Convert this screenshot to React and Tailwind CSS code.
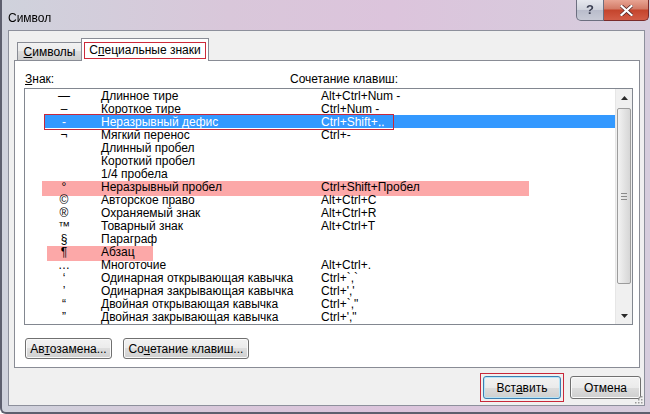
const ROWS = [
  ['—', 'Длинное тире', 'Alt+Ctrl+Num -'],
  ['–', 'Короткое тире', 'Ctrl+Num -'],
  ['-', 'Неразрывный дефис', 'Ctrl+Shift+‥'],
  ['¬', 'Мягкий перенос', 'Ctrl+-'],
  ['', 'Длинный пробел', ''],
  ['', 'Короткий пробел', ''],
  ['', '1/4 пробела', ''],
  ['°', 'Неразрывный пробел', 'Ctrl+Shift+Пробел'],
  ['©', 'Авторское право', 'Alt+Ctrl+C'],
  ['®', 'Охраняемый знак', 'Alt+Ctrl+R'],
  ['™', 'Товарный знак', 'Alt+Ctrl+T'],
  ['§', 'Параграф', ''],
  ['¶', 'Абзац', ''],
  ['…', 'Многоточие', 'Alt+Ctrl+.'],
  ['‘', 'Одинарная открывающая кавычка', 'Ctrl+`,`'],
  ['’', 'Одинарная закрывающая кавычка', "Ctrl+','"],
  ['“', 'Двойная открывающая кавычка', 'Ctrl+`,"'],
  ['”', 'Двойная закрывающая кавычка', 'Ctrl+\',"'],
];

const SELECTED = 2;

const BTN =
  'h-[21px] border border-[#707070] rounded-[3px] bg-[linear-gradient(#f2f2f2,#ebebeb_50%,#dddddd_50%,#cfcfcf)] shadow-[inset_0_0_0_1px_#fafafa] text-[12px] leading-none text-black flex items-center justify-center';

const Win7Button = ({ children, className = '' }) => (
  <div className={`${BTN} ${className}`}>{children}</div>
);

const Scrollbar = () => (
  <div className="w-[17px] h-full bg-[#f0f0f0] border-l border-[#e6e6e6] flex flex-col">
    <div className="h-[17px] flex items-center justify-center">
      <svg width="7" height="4" viewBox="0 0 7 4">
        <path d="M0 4 L3.5 0 L7 4 Z" fill="#2a2a2a" />
      </svg>
    </div>
    <div className="mt-[2px] h-[176px] mx-[1px] border border-[#9c9c9c] rounded-[2px] bg-[linear-gradient(90deg,#f3f3f3,#e4e4e4_50%,#d6d6d6)] flex flex-col items-center justify-center gap-[2px]">
      <div className="w-[6px] h-px bg-[#8a8a8a]" />
      <div className="w-[6px] h-px bg-[#8a8a8a]" />
      <div className="w-[6px] h-px bg-[#8a8a8a]" />
    </div>
    <div className="flex-1" />
    <div className="h-[17px] flex items-center justify-center">
      <svg width="7" height="4" viewBox="0 0 7 4">
        <path d="M0 0 L3.5 4 L7 0 Z" fill="#2a2a2a" />
      </svg>
    </div>
  </div>
);

const Row = ({ row, selected }) => {
  const [sym, name, keys] = row;
  return (
    <div className="h-[13px] flex text-[12px] leading-[12px]">
      <div className="w-[20px] shrink-0" />
      <div className={`flex-1 flex pt-px ${selected ? 'bg-[#3399ff] text-white' : 'text-black'}`}>
        <span className="w-[38px] text-center">{sym}</span>
        <span className="w-[238px] pl-[18px] whitespace-nowrap">{name}</span>
        <span className="whitespace-nowrap">{keys}</span>
      </div>
    </div>
  );
};

export default function App() {
  return (
    <div
      className="w-[650px] h-[414px] overflow-hidden relative flex flex-col bg-[linear-gradient(90deg,#cfd2dc,#d9c7da_35%,#dcc4dc_60%,#d6cddd)] border-l-2 border-b-2 border-[#5d5f6e] rounded-bl-[6px]"
      style={{ fontFamily: '"Liberation Sans", Arial, sans-serif' }}
    >
      {/* Title bar */}
      <div className="h-[30px] flex items-start shrink-0">
        <div className="pl-[6px] pt-[11px] text-[12px] leading-[14px] text-black">Символ</div>
        <div className="flex-1" />
        <div className="flex mr-[1px]">
          <div className="w-[28px] h-[21px] border border-[#6c6f80] border-t-0 rounded-bl-[5px] bg-[linear-gradient(#e6e8ee,#cfd2dc_50%,#b9bccb_50%,#c8cad6)] flex items-center justify-center text-[13px] font-bold text-[#3b3f52]">
            ?
          </div>
          <div className="w-[45px] h-[21px] border border-[#7a2a2a] border-t-0 border-l-0 rounded-br-[5px] bg-[linear-gradient(#e8a493,#d27a66_45%,#c4442c_50%,#d25c46)] flex items-center justify-center">
            <svg width="13" height="11" viewBox="0 0 13 11">
              <path d="M1.5 1 L11.5 10 M11.5 1 L1.5 10" stroke="#4a1d1d" strokeWidth="3.6" strokeLinecap="square" />
              <path d="M1.5 1 L11.5 10 M11.5 1 L1.5 10" stroke="#ffffff" strokeWidth="2.2" strokeLinecap="square" />
            </svg>
          </div>
        </div>
      </div>

      {/* Client area */}
      <div className="ml-[6px] w-[637px] h-[376px] border border-[#8d909c] bg-[#f0f0f0] flex flex-col relative">
        {/* Tabs */}
        <div className="flex items-end h-[29px] pl-[8px] shrink-0">
          <div className="h-[18px] w-[65px] border border-b-0 border-[#898c95] bg-[linear-gradient(#f2f2f2,#ebebeb_50%,#dddddd_50%,#cfcfcf)] flex items-center justify-center text-[12px] text-black">
            <span><span className="underline">С</span>имволы</span>
          </div>
          <div className="h-[23px] w-[128px] -mb-px -ml-px border border-b-0 border-[#898c95] bg-white relative z-10 flex items-center justify-center text-[12px] text-black">
            <span className="border border-[#cc2a3a] px-[4px] h-[17px] flex items-center">
              С<span className="underline">п</span>ециальные знаки
            </span>
          </div>
        </div>

        {/* Tab panel */}
        <div className="ml-[5px] w-[626px] h-[308px] border border-[#898c95] bg-white flex flex-col shrink-0">
          <div className="mt-[11px] pl-[10px] flex h-[14px] text-[12px] leading-[14px] text-black">
            <span className="w-[265px]"><span className="underline">З</span>нак:</span>
            <span>Сочетание клавиш:</span>
          </div>

          <div className="mt-[2px] ml-[9px] w-[609px] h-[237px] border border-[#828790] flex relative">
            <div className="flex-1 flex flex-col">
              {ROWS.map((row, i) => (
                <Row key={i} row={row} selected={i === SELECTED} />
              ))}
            </div>
            <Scrollbar />

            {/* marker highlights */}
            <div className="absolute left-[17px] top-[92px] w-[487px] h-[15px] bg-[#fca8a8] mix-blend-multiply" />
            <div className="absolute left-[22px] top-[157px] w-[106px] h-[15px] bg-[#fca8a8] mix-blend-multiply" />
            {/* red frame around selected row */}
            <div className="absolute left-[19px] top-[25px] w-[350px] h-[16px] border border-[#c8283a]" />
          </div>

          <div className="mt-[13px] ml-[10px] flex gap-[11px]">
            <Win7Button className="w-[87px]">
              <span>Ав<span className="underline">т</span>озамена...</span>
            </Win7Button>
            <Win7Button className="w-[126px]">
              <span>Со<span className="underline">ч</span>етание клавиш...</span>
            </Win7Button>
          </div>
        </div>

        {/* Dialog buttons */}
        <div className="flex justify-end items-center gap-[6px] mt-[5px] mr-[3px]">
          <div className="border border-[#c8283a] p-[2px]">
            <div className="w-[78px] h-[23px] border border-[#3c7fb1] rounded-[3px] bg-[linear-gradient(#f2f2f2,#ebebeb_50%,#dddddd_50%,#cfcfcf)] shadow-[inset_0_0_0_1px_#b6e4f8] flex items-center justify-center text-[12px] text-black">
              <span>Вст<span className="underline">а</span>вить</span>
            </div>
          </div>
          <Win7Button className="w-[71px] h-[23px]">Отмена</Win7Button>
        </div>

        {/* size grip */}
        <svg className="absolute right-[1px] bottom-[1px]" width="10" height="10" viewBox="0 0 10 10">
          {[[8, 2], [8, 5], [5, 5], [8, 8], [5, 8], [2, 8]].map(([x, y], i) => (
            <rect key={i} x={x} y={y} width="1.5" height="1.5" fill="#9a9a9a" />
          ))}
        </svg>
      </div>
    </div>
  );
}
